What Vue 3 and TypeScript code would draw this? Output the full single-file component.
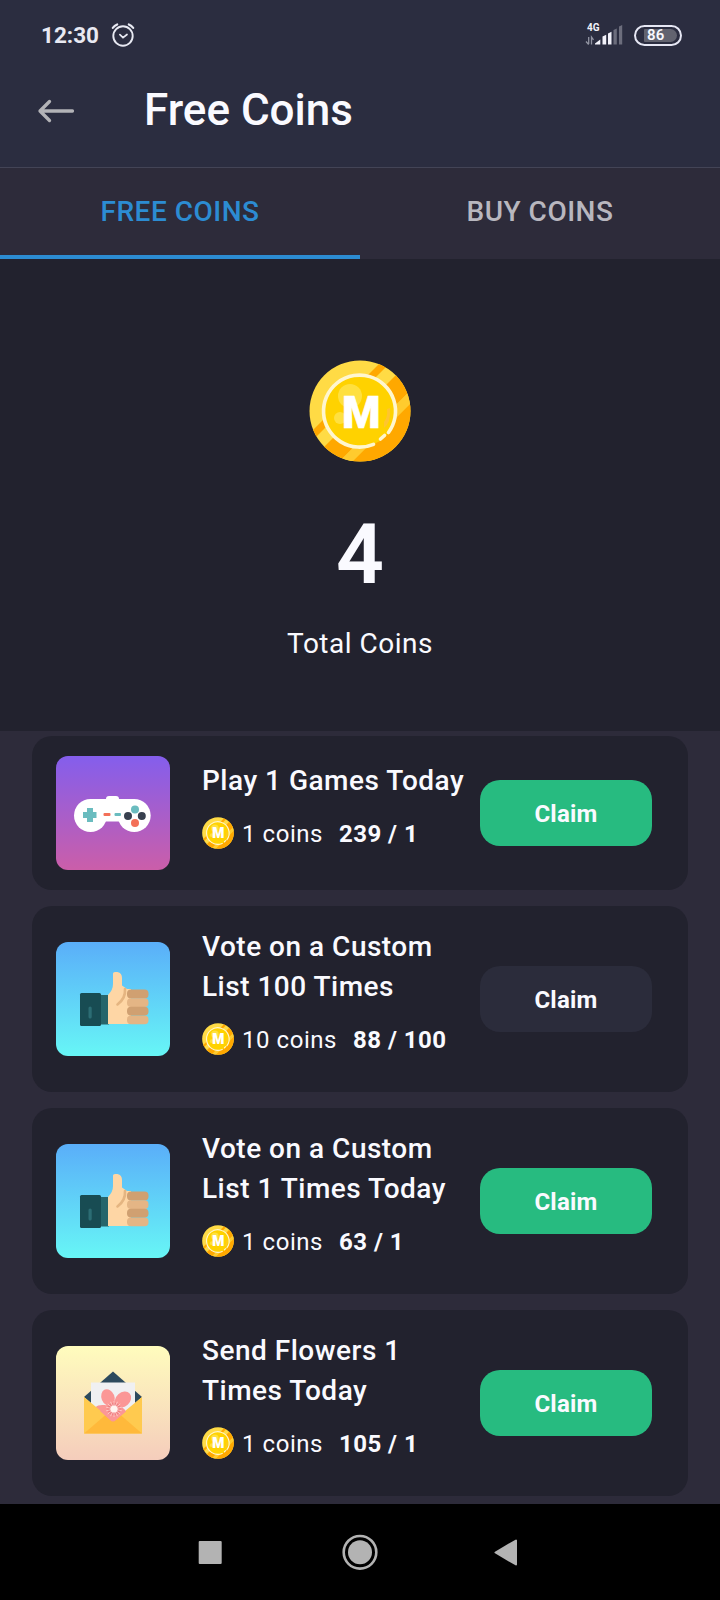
<script setup lang="ts">
interface Task {
  kind: 'game' | 'vote' | 'flower'
  title: string
  reward: string
  progress: string
  ready: boolean
}

const tasks: Task[] = [
  { kind: 'game', title: 'Play 1 Games Today', reward: '1 coins', progress: '239 / 1', ready: true },
  { kind: 'vote', title: 'Vote on a Custom\nList 100 Times', reward: '10 coins', progress: '88 / 100', ready: false },
  { kind: 'vote', title: 'Vote on a Custom\nList 1 Times Today', reward: '1 coins', progress: '63 / 1', ready: true },
  { kind: 'flower', title: 'Send Flowers 1\nTimes Today', reward: '1 coins', progress: '105 / 1', ready: true },
]

const rays = Array.from({ length: 14 }, (_, i) => (i * 360) / 14)
</script>

<template>
  <div class="screen">
    <svg class="defs" aria-hidden="true">
      <defs>
        <clipPath id="coin-disc"><circle cx="51" cy="51" r="50.5" /></clipPath>
        <symbol id="coin" viewBox="0 0 102 102">
          <g clip-path="url(#coin-disc)">
            <rect width="102" height="102" fill="#ffdb45" />
            <path d="M0 74 74 0H84L0 84Z" fill="#ffa800" />
            <path d="M0 102 102 0V30L30 102Z" fill="#ffa800" />
            <path d="M30 102 102 30V43L43 102Z" fill="#ffcb2e" />
            <path d="M43 102 102 43V102Z" fill="#ffa800" />
            <circle cx="51" cy="51" r="36" fill="#ffd200" />
            <circle cx="41" cy="36" r="12" fill="#ffe03f" />
            <circle cx="31" cy="58" r="6" fill="#ffe03f" />
            <path d="M81 48Q82 63 75 68L75 62Q79 57 78 49Z" fill="#ffc52e" />
            <path d="M64.500 84.300A36 36 0 1 1 79.500 72.500" fill="none" stroke="#fff6cf" stroke-width="3.600" stroke-linecap="round" />
            <path d="M71.500 79 75.500 75.500" stroke="#fff6cf" stroke-width="3.600" stroke-linecap="round" />
          </g>
          <text x="52.300" y="67.700" text-anchor="middle" class="coin-letter">M</text>
        </symbol>
      </defs>
    </svg>

    <header class="header">
      <div class="status">
        <span class="clock">12:30</span>
        <svg class="alarm" viewBox="0 0 26 26" fill="none" stroke="#e8e9f2" stroke-linecap="round">
          <circle cx="13" cy="14" r="9.700" stroke-width="1.900" />
          <path d="M2.800 5.900Q4.500 3.700 7.200 2.500M23.200 5.900Q21.500 3.700 18.800 2.500" stroke-width="2.200" />
          <path d="M9.900 12.700 13 15.600 17 12.500" stroke-width="1.700" />
        </svg>
        <svg class="signal" viewBox="0 0 40 26">
          <text x="2" y="8.500" class="net">4G</text>
          <path d="M3.700 15v7M1 19.500l2.700 3M6.500 22.500V15l2 2.800" stroke="#9294a2" stroke-width="1.300" fill="none" />
          <path d="M10 22.500v-1l5.300-4v5Z" fill="#f2f2fa" />
          <path d="M17.500 22.500v-8l3.700-1.800v9.800Z" fill="#f2f2fa" />
          <path d="M23 22.500v-11l3.500-1.700v12.700Z" fill="#f2f2fa" />
          <path d="M28.500 22.500v-14.500l3.300-1.600v16.100ZM34 22.500v-18l3.200-1.600v19.600Z" fill="#6c6d7c" />
        </svg>
        <div class="battery"><div class="level"></div><span class="percent">86</span></div>
      </div>
      <div class="bar">
        <svg class="back" viewBox="0 0 38 24" fill="none" stroke="#b3b3b7" stroke-width="3.300" stroke-linecap="round" stroke-linejoin="round">
          <path d="M35.500 12H3M12.500 2.500 3 12 12.500 21.500" />
        </svg>
        <h1>Free Coins</h1>
      </div>
    </header>

    <nav class="tabs">
      <div class="tab active">FREE COINS</div>
      <div class="tab">BUY COINS</div>
    </nav>

    <section class="total">
      <svg class="big-coin"><use href="#coin" /></svg>
      <div class="amount">4</div>
      <div class="caption">Total Coins</div>
    </section>

    <main class="list">
      <article v-for="(task, i) in tasks" :key="i" class="card">
        <div class="art" :class="task.kind">
          <svg v-if="task.kind === 'game'" viewBox="0 0 114 114">
            <rect x="50" y="40" width="13" height="10" rx="3" fill="#fff" />
            <circle cx="34.500" cy="59.500" r="16.500" fill="#fff" />
            <circle cx="78.200" cy="59.500" r="16.500" fill="#fff" />
            <path d="M34.500 43H78.200V65.500H34.500Z" fill="#fff" />
            <path d="M31 52h6v4h3.500v6H37v4h-6v-4h-4v-6h4Z" fill="#6abcbf" />
            <rect x="47.500" y="57" width="7" height="3" rx="1" fill="#f37058" />
            <rect x="58.500" y="57" width="6.500" height="3" rx="1" fill="#6abcbf" />
            <circle cx="79" cy="53.500" r="4" fill="#6abcbf" />
            <circle cx="72" cy="60" r="4" fill="#38404f" />
            <circle cx="85.800" cy="60" r="4" fill="#38404f" />
            <circle cx="79" cy="67" r="4" fill="#f37058" />
          </svg>
          <svg v-else-if="task.kind === 'vote'" viewBox="0 0 114 114">
            <rect x="44" y="53" width="9" height="29.500" fill="#26656b" />
            <rect x="24" y="51" width="21" height="33" rx="1.500" fill="#184c53" />
            <rect x="32.500" y="64.500" width="3.200" height="12" rx="1.600" fill="#2c6d74" />
            <path d="M52 53Q57 48 57 42V31.500Q57 30 59 30H61.500Q66 31 66 36V43.500L71 47H75V82H52Z" fill="#fed6a5" />
            <path d="M69 47C69.500 53 67.500 58 61.500 62.500" stroke="#e5b581" stroke-width="2.600" fill="none" stroke-linecap="round" />
            <rect x="71" y="47.500" width="21.500" height="9" rx="4" fill="#d0a071" />
            <rect x="71" y="73.400" width="21.500" height="8.800" rx="4" fill="#e4b585" />
            <rect x="71" y="56.200" width="21.500" height="8.800" rx="4" fill="#e4b585" />
            <rect x="71" y="64.800" width="21.500" height="8.800" rx="4" fill="#d0a071" />
          </svg>
          <svg v-else viewBox="0 0 114 114">
            <path d="M28 51 57 25.500 86 51 57 76Z" fill="#2d4a5d" />
            <path d="M35 36.500H79V58L57 76 35 58Z" fill="#f0f0f2" />
            <g fill="#fb9796">
              <ellipse cx="52" cy="51.500" rx="6.500" ry="8.500" transform="rotate(-22 52 51.500)" />
              <ellipse cx="67" cy="53.500" rx="7" ry="9" transform="rotate(48 67 53.500)" />
              <ellipse cx="48" cy="64" rx="9" ry="5" transform="rotate(8 48 64)" />
              <circle cx="58" cy="63" r="8.500" />
            </g>
            <path d="M28 51 57 75 86 51V87.500H28Z" fill="#ffca4f" />
            <path d="M28 87.500 57 62.500 86 87.500Z" fill="#ffb93b" />
            <path d="M44 65Q51 59 58 59 66 59 70 65.500L60 74Q57 77 54 74Z" fill="#fb9796" />
            <circle cx="58" cy="63" r="6.500" fill="#f07f82" />
            <g stroke="#ffd9d5" stroke-width=".7">
              <path v-for="a in rays" :key="a" d="M58 63V55" :transform="`rotate(${a} 58 63)`" />
            </g>
            <circle cx="58" cy="63" r="3.600" fill="#fff4f0" />
          </svg>
        </div>
        <div class="info">
          <h2>{{ task.title }}</h2>
          <div class="reward">
            <svg class="small-coin"><use href="#coin" /></svg>
            <span class="value">{{ task.reward }}</span>
            <strong>{{ task.progress }}</strong>
          </div>
        </div>
        <button class="claim" :class="{ ready: task.ready }">Claim</button>
      </article>
    </main>

    <footer class="system">
      <svg viewBox="0 0 24 24"><rect x="0.700" y="0.900" width="23" height="23" rx="1" fill="#b3b3b3" /></svg>
      <svg class="home" viewBox="0 0 36 36">
        <circle cx="18" cy="18.300" r="16.300" fill="none" stroke="#b3b3b3" stroke-width="2.600" />
        <circle cx="18" cy="18.300" r="12" fill="#b3b3b3" />
      </svg>
      <svg class="prev" viewBox="0 0 24 28"><path d="M1.500 14.500 22 2.500V26.500Z" fill="#b3b3b3" stroke="#b3b3b3" stroke-width="2" stroke-linejoin="round" /></svg>
    </footer>
  </div>
</template>

<style>
body { margin: 0; background: #2d2b3a; }
</style>

<style scoped>
.screen {
  width: 720px;
  height: 1600px;
  display: flex;
  flex-direction: column;
  overflow: hidden;
  background: #2d2b3a;
  color: #fafaff;
  font-family: Roboto, "Liberation Sans", sans-serif;
}
.defs { position: absolute; width: 0; height: 0; }
.coin-letter { font: 900 44px Roboto, sans-serif; fill: #fff; stroke: #fff; stroke-width: .6px; }

.header {
  box-sizing: border-box;
  height: 168px;
  flex: none;
  background: #2b2d40;
  border-bottom: 1px solid #434456;
}
.status { height: 70px; display: flex; align-items: center; padding: 0 38px 0 41px; }
.clock { width: 58px; font-size: 22.500px; font-weight: 700; color: #e8e9f2; white-space: nowrap; }
.alarm { width: 26px; height: 26px; margin-left: 10.500px; }
.signal { width: 40px; height: 26px; margin-left: auto; margin-right: 9px; }
.net { font: 700 10px Roboto, sans-serif; fill: #f2f2fa; }
.battery {
  box-sizing: border-box;
  width: 48px;
  height: 21px;
  padding: 2px 3px;
  border: 2px solid #e6e7f4;
  border-radius: 11px;
  display: grid;
}
.level { grid-area: 1 / 1; margin-left: 5px; border-radius: 1px 7px 7px 1px; background: #62636f; }
.percent {
  grid-area: 1 / 1;
  font-size: 15px;
  line-height: 13px;
  font-weight: 600;
  letter-spacing: .3px;
  padding-left: 8px;
  color: #f8f8fe;
}
.bar { display: flex; align-items: center; height: 80px; padding-left: 37px; }
.back { width: 38px; height: 24px; margin-top: 2px; }
h1 { margin: 0 0 0 69px; font-size: 44px; font-weight: 500; line-height: 52px; }

.tabs { display: flex; height: 91px; flex: none; }
.tab {
  flex: 1;
  display: flex;
  align-items: center;
  justify-content: center;
  font-size: 28px;
  font-weight: 500;
  letter-spacing: .5px;
  color: #b8b7bf;
  border-bottom: 4px solid transparent;
}
.tab.active { color: #2c8cd2; border-color: #2c8cd2; }

.total {
  height: 472px;
  flex: none;
  display: flex;
  flex-direction: column;
  align-items: center;
  background: #22222e;
}
.big-coin { width: 102px; height: 102px; margin-top: 101px; }
.amount { margin-top: 44px; font-size: 84px; line-height: 98px; font-weight: 600; }
.caption { margin-top: 23px; font-size: 28px; line-height: 33px; letter-spacing: .5px; }

.list { flex: 1; display: flex; flex-direction: column; gap: 16px; padding: 5px 32px 8px; }
.card {
  display: flex;
  align-items: center;
  padding: 20px 36px 20px 24px;
  border-radius: 20px;
  background: #22222e;
}
.art { width: 114px; height: 114px; flex: none; border-radius: 12px; overflow: hidden; }
.art svg { display: block; width: 114px; height: 114px; }
.game { background: linear-gradient(#845eec, #cb5ea9); }
.vote { background: linear-gradient(#5aaef9, #67f6f6); }
.flower { background: linear-gradient(#fffcbd, #f5cdbc); }
.info { flex: 1; margin-left: 32px; padding-bottom: 17px; min-width: 0; }
h2 { margin: 0; padding-top: 1px; font-size: 28px; line-height: 40px; font-weight: 500; letter-spacing: .5px; white-space: pre; }
.reward { height: 32px; margin-top: 16px; display: flex; align-items: center; font-size: 24px; white-space: pre; }
.small-coin { width: 32px; height: 32px; margin-right: 8px; }
.value { letter-spacing: .55px; margin-right: 16px; padding-top: 2px; }
.reward strong { font-weight: 700; letter-spacing: .45px; padding-top: 2px; }
.claim {
  width: 172px;
  height: 66px;
  flex: none;
  padding: 2px 0 0;
  border: 0;
  border-radius: 20px;
  background: #2b2c3b;
  color: #fafaff;
  font: 700 24px Roboto, sans-serif;
  letter-spacing: .2px;
}
.claim.ready { background: #27bb80; }

.system { height: 96px; flex: none; background: #000; display: flex; align-items: center; padding-left: 198px; }
.system svg { width: 24px; height: 24px; }
.system .home { width: 36px; height: 36px; margin: 0 116px 0 119.500px; }
.system .prev { width: 24px; height: 28px; }
</style>
